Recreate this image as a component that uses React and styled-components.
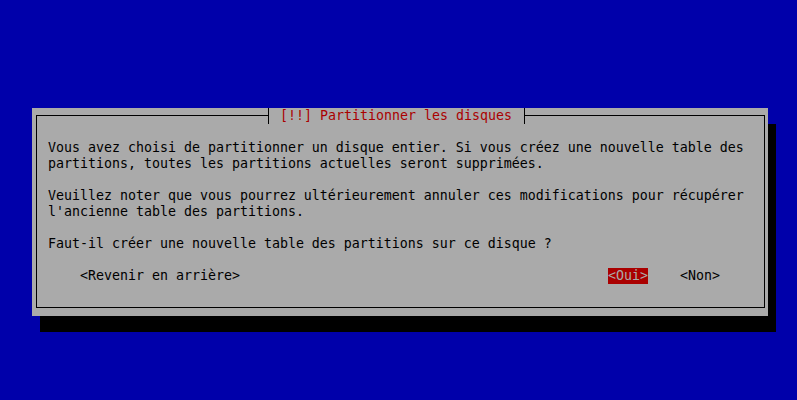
import React from 'react';
import styled, { createGlobalStyle } from 'styled-components';

const GlobalStyle = createGlobalStyle`
    html, body {
        margin: 0;
        padding: 0;
        background: #0000aa;
    }
`

const Screen = styled.div`
    width: 797px;
    height: 400px;
    overflow: hidden;
    background: #0000aa;
    padding-top: 108px;
    padding-left: 32px;
    box-sizing: border-box;
    font-family: "DejaVu Sans Mono", "Liberation Mono", monospace;
    font-size: 13.29px;
    line-height: 16px;
    color: #000;
`

const Dialog = styled.div`
    width: 736px;
    height: 208px;
    box-sizing: border-box;
    padding: 7px 3px 8px 4px;
    background: #aaaaaa;
    box-shadow: 8px 16px 0 #000;
`

const Frame = styled.div`
    height: 100%;
    box-sizing: border-box;
    border: 1px solid #000;
    display: flex;
    flex-direction: column;
`

const Title = styled.div`
    display: flex;
    align-self: flex-start;
    height: 16px;
    margin: -8px 0 0 227px;
    background: #aaaaaa;
`

const Tick = styled.span`
    width: 8px;
    height: 16px;
    background:
        linear-gradient(#000, #000) no-repeat 4px 0 / 1px 16px,
        linear-gradient(#000, #000) no-repeat ${props => props.side === 'left' ? '0' : '4px'} 7px / 4px 1px;
`

const TitleText = styled.span`
    white-space: pre;
    color: #aa0000;
`

const Body = styled.div`
    margin-top: 16px;
    padding-left: 11px;
    display: flex;
    flex-direction: column;
    gap: 16px;
`

const Paragraph = styled.div`
    white-space: pre;
`

const Line = styled.div`
    height: 16px;
`

const ButtonRow = styled.div`
    display: flex;
    justify-content: space-between;
    margin-top: 16px;
    padding: 0 44px 0 43px;
`

const ButtonGroup = styled.div`
    display: flex;
    gap: 32px;
`

const Button = styled.span`
    white-space: pre;
    height: 16px;
    background: ${props => props.active ? '#aa0000' : 'transparent'};
    color: ${props => props.active ? '#aaaaaa' : '#000'};
`

const paragraphs = [
    [
        'Vous avez choisi de partitionner un disque entier. Si vous créez une nouvelle table des',
        'partitions, toutes les partitions actuelles seront supprimées.',
    ],
    [
        'Veuillez noter que vous pourrez ultérieurement annuler ces modifications pour récupérer',
        "l'ancienne table des partitions.",
    ],
    ['Faut-il créer une nouvelle table des partitions sur ce disque ?'],
]

const App = () => {
    return (
        <Screen>
            <GlobalStyle />
            <Dialog>
                <Frame>
                    <Title>
                        <Tick side='left' />
                        <TitleText> [!!] Partitionner les disques </TitleText>
                        <Tick side='right' />
                    </Title>
                    <Body>
                        {paragraphs.map((p, i) => (
                            <Paragraph key={i}>
                                {p.map((l, j) => <Line key={j}>{l}</Line>)}
                            </Paragraph>
                        ))}
                    </Body>
                    <ButtonRow>
                        <Button>{'<Revenir en arrière>'}</Button>
                        <ButtonGroup>
                            <Button active>{'<Oui>'}</Button>
                            <Button>{'<Non>'}</Button>
                        </ButtonGroup>
                    </ButtonRow>
                </Frame>
            </Dialog>
        </Screen>
    )
}

export default App
